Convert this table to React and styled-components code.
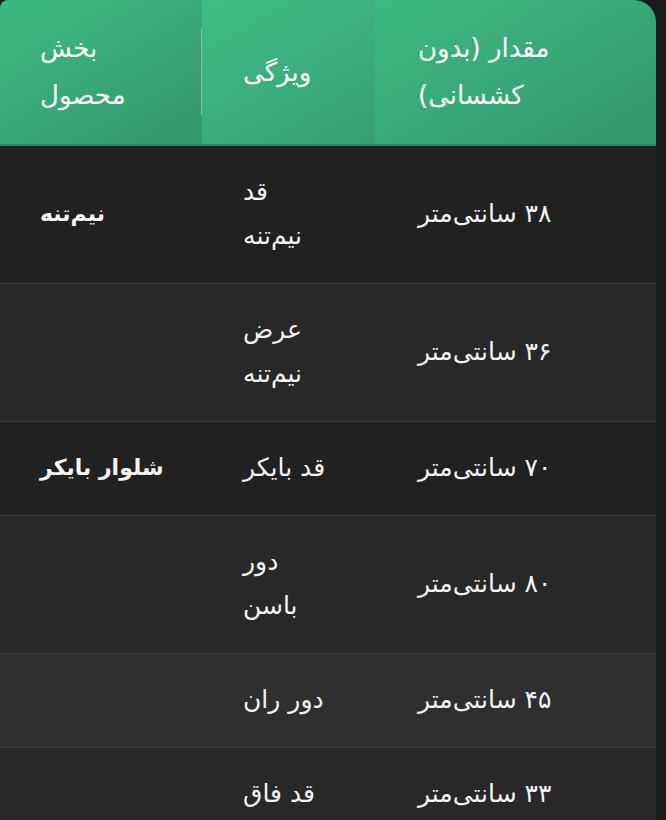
import React from 'react';
import styled, { createGlobalStyle } from 'styled-components';

const GlobalStyle = createGlobalStyle`
  html, body {
    margin: 0;
    padding: 0;
    background: #1c1c1c;
  }
  body {
    font-family: "DejaVu Sans", "Noto Sans", sans-serif;
    overflow: hidden;
  }
`;

const Frame = styled.div`
  display: flex;
  width: 666px;
  height: 820px;
  background: #1c1c1c;
`;

const Scroller = styled.div`
  width: 656px;
  overflow: hidden;
  border-radius: 8px 22px 0 0;
`;

const Table = styled.table`
  direction: rtl;
  width: 656px;
  border-collapse: collapse;
  table-layout: fixed;
  color: #f4f4f4;
  font-size: 25px;
`;

const HeadCell = styled.th`
  position: relative;
  height: 145px;
  box-sizing: border-box;
  padding: 0 20px 0 ${({ $pl }) => $pl}px;
  text-align: left;
  vertical-align: middle;
  white-space: nowrap;
  font-size: 26px;
  font-weight: 400;
  line-height: 47px;
  color: #ffffff;
  background: ${({ $light }) =>
    $light
      ? 'linear-gradient(150deg, #41bd87 0%, #379f73 100%)'
      : 'linear-gradient(150deg, #3eb983 0%, #34976d 100%)'};
  border-bottom: 2px solid #2e8a61;

  ${({ $divider }) =>
    $divider &&
    `
    &::after {
      content: '';
      position: absolute;
      right: 0;
      top: 28px;
      bottom: 29px;
      width: 1px;
      background: rgba(255, 255, 255, 0.35);
    }
  `}
`;

const Row = styled.tr`
  background: ${({ $bg }) => $bg};
  border-bottom: 1px solid #3a3a3a;
`;

const Cell = styled.td`
  box-sizing: border-box;
  padding: 24px 20px 25px ${({ $pl }) => $pl}px;
  text-align: left;
  vertical-align: middle;
  white-space: nowrap;
  line-height: 44px;
  font-size: ${({ $bold }) => ($bold ? '22px' : 'inherit')};
  font-weight: ${({ $bold }) => ($bold ? 700 : 400)};
`;

const rows = [
  { part: 'نیم‌تنه', feature: ['قد', 'نیم‌تنه'], value: '۳۸ سانتی‌متر', bg: '#212121' },
  { part: '', feature: ['عرض', 'نیم‌تنه'], value: '۳۶ سانتی‌متر', bg: '#282828' },
  { part: 'شلوار بایکر', feature: ['قد بایکر'], value: '۷۰ سانتی‌متر', bg: '#212121' },
  { part: '', feature: ['دور', 'باسن'], value: '۸۰ سانتی‌متر', bg: '#282828' },
  { part: '', feature: ['دور ران'], value: '۴۵ سانتی‌متر', bg: '#2f2f2f' },
  { part: '', feature: ['قد فاق'], value: '۳۳ سانتی‌متر', bg: '#282828' },
];

const Lines = ({ items }) =>
  items.map((t, i) => (
    <React.Fragment key={i}>
      {i > 0 && <br />}
      {t}
    </React.Fragment>
  ));

export default function App() {
  return (
    <>
      <GlobalStyle />
      <Frame>
        <Scroller>
          <Table>
            <colgroup>
              <col style={{ width: 281 }} />
              <col style={{ width: 173 }} />
              <col style={{ width: 202 }} />
            </colgroup>
            <thead>
              <tr>
                <HeadCell $pl={43}>
                  <Lines items={['مقدار (بدون', 'کشسانی)']} />
                </HeadCell>
                <HeadCell $pl={41} $light>ویژگی</HeadCell>
                <HeadCell $pl={40} $divider>
                  <Lines items={['بخش', 'محصول']} />
                </HeadCell>
              </tr>
            </thead>
            <tbody>
              {rows.map((r, i) => (
                <Row key={i} $bg={r.bg}>
                  <Cell $pl={43}>{r.value}</Cell>
                  <Cell $pl={41}>
                    <Lines items={r.feature} />
                  </Cell>
                  <Cell $pl={40} $bold>{r.part}</Cell>
                </Row>
              ))}
            </tbody>
          </Table>
        </Scroller>
      </Frame>
    </>
  );
}
